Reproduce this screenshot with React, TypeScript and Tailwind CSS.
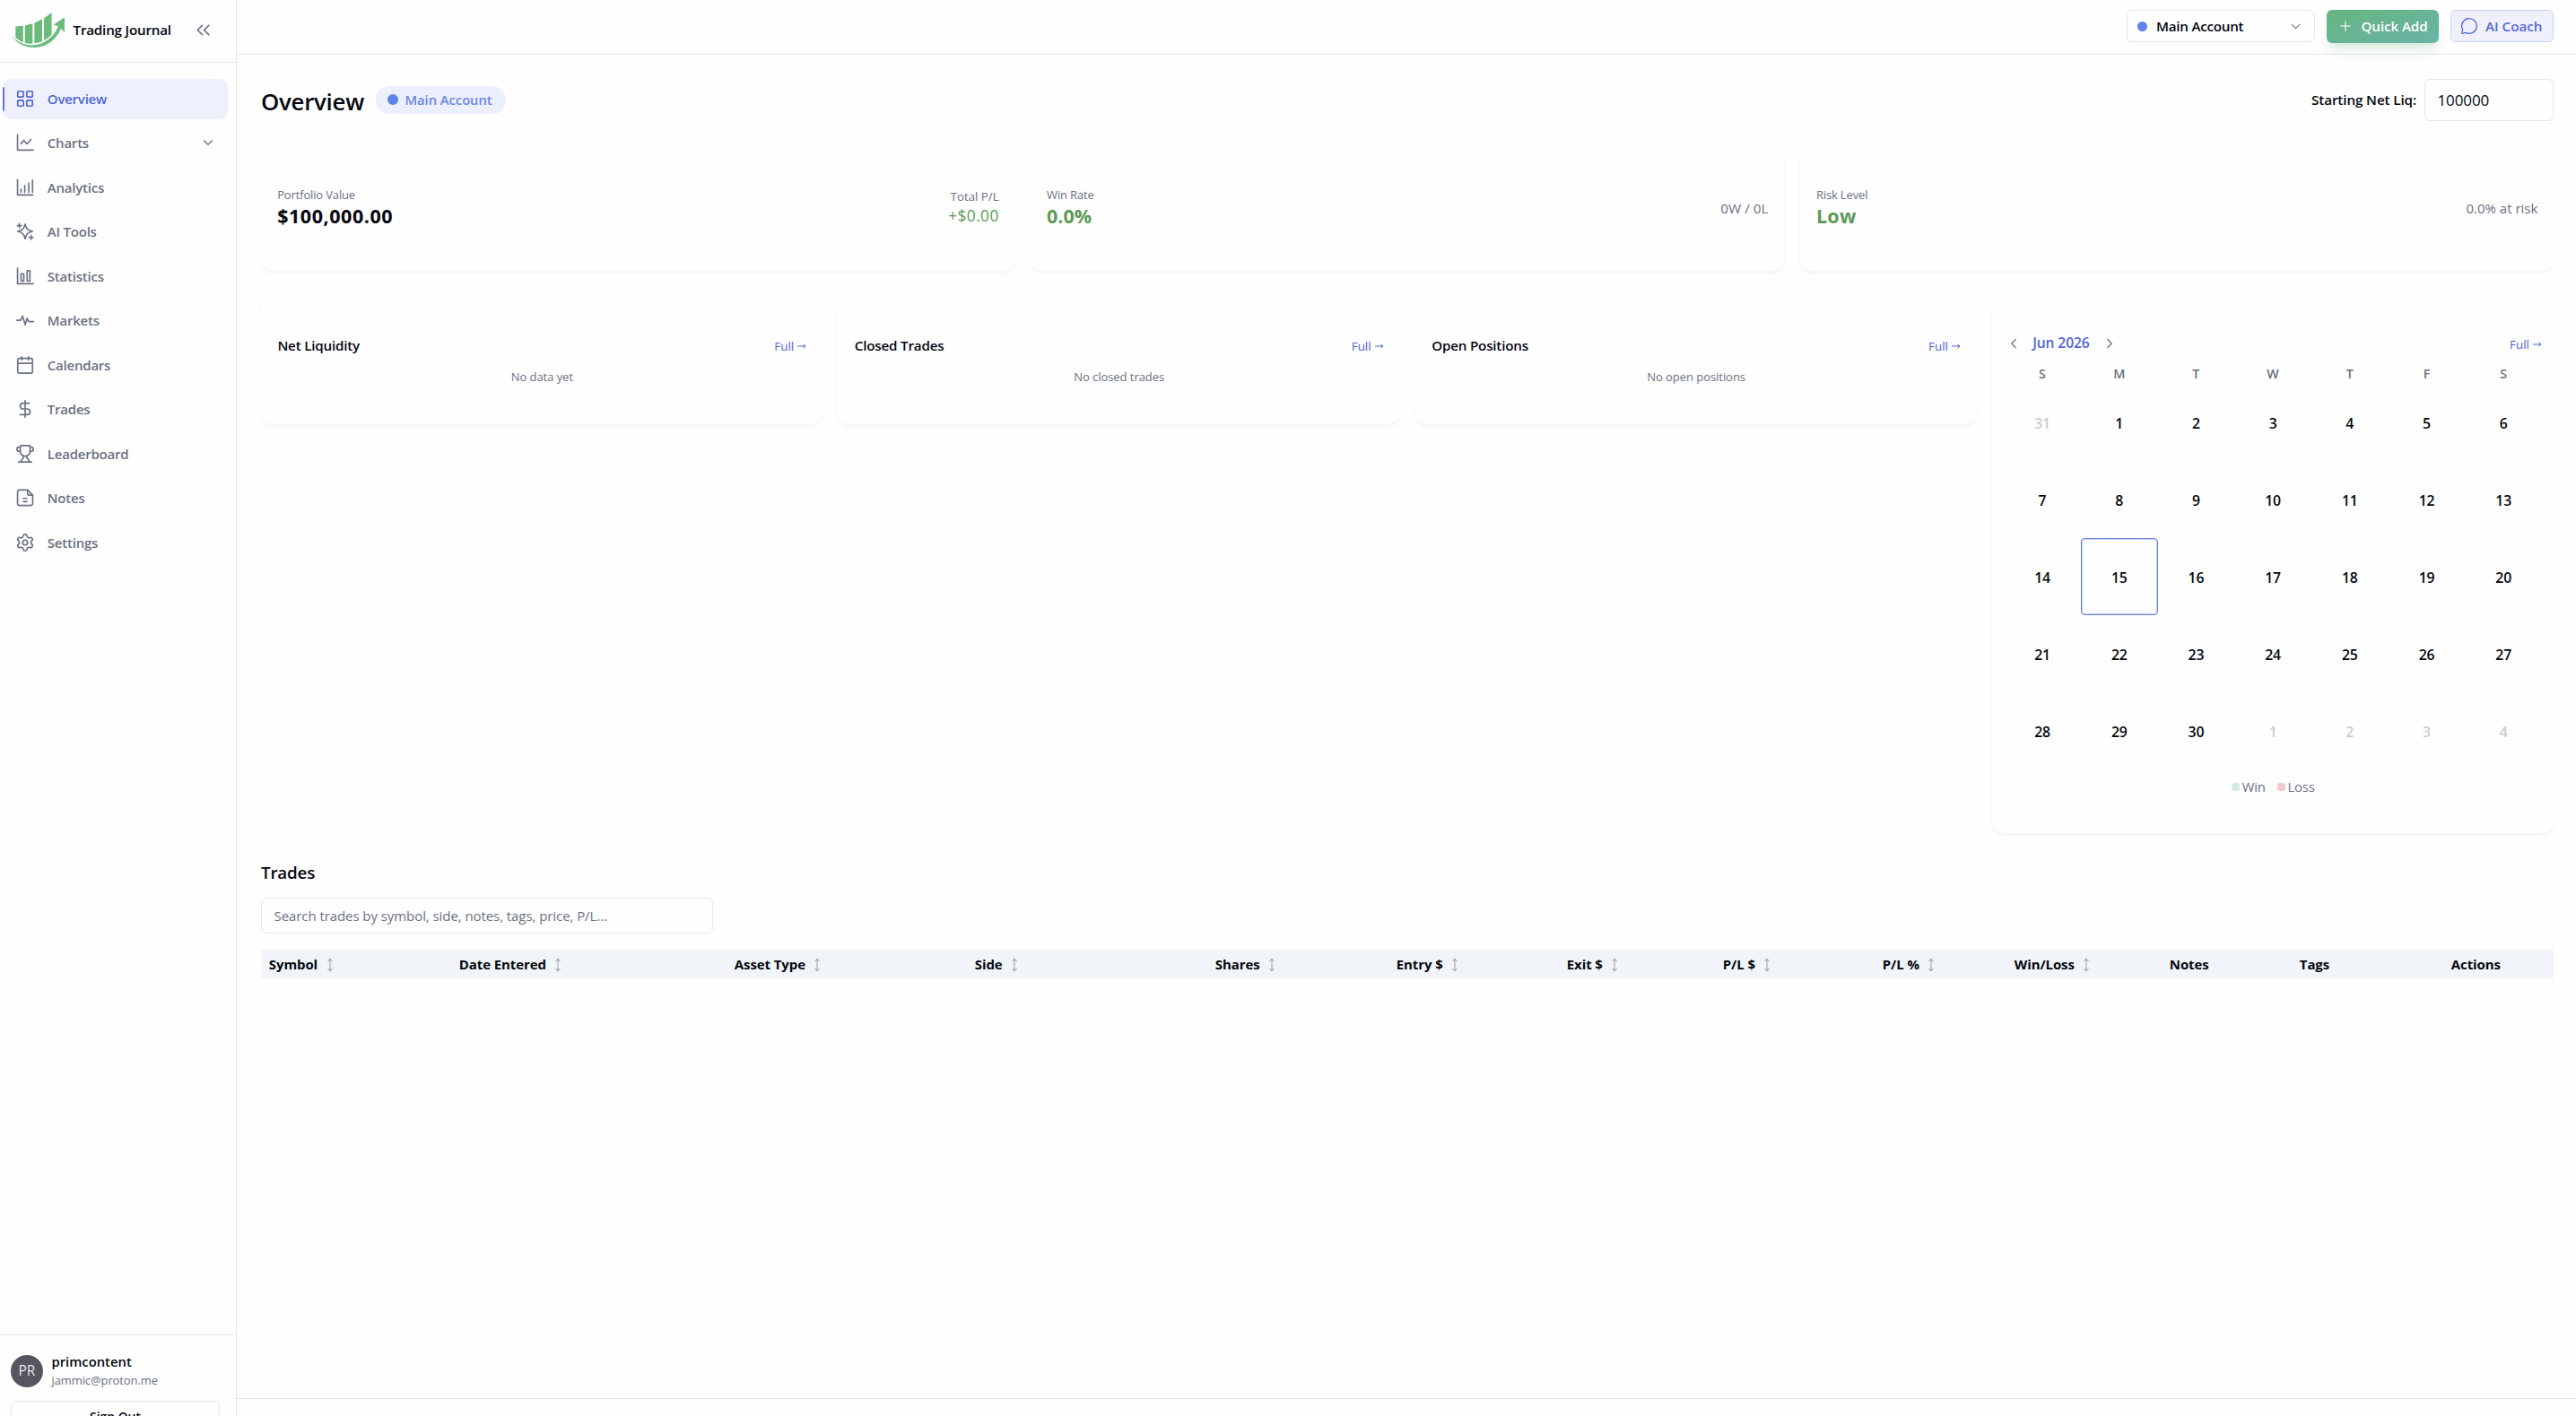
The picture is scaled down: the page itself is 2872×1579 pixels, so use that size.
import type { ReactNode } from "react";
import { Calendar, ChevronDown, ChevronLeft, ChevronRight, ChevronsLeft, DollarSign, LayoutGrid, MessageCircle, Plus, Settings, Trophy } from "lucide-react";

const iconProps = {
  width: 22,
  height: 22,
  viewBox: "0 0 24 24",
  fill: "none",
  stroke: "currentColor",
  strokeWidth: 1.8,
  strokeLinecap: "round" as const,
  strokeLinejoin: "round" as const,
};

const navItems: { label: string; icon: ReactNode }[] = [
  { label: "Overview", icon: <LayoutGrid size={22} strokeWidth={1.8} /> },
  {
    label: "Charts",
    icon: (
      <svg {...iconProps}>
        <path d="M2.8 2.5v18.7h19" />
        <path d="m6.8 13.2 3.6-4 3.8 4.4 5-5.4" />
      </svg>
    ),
  },
  {
    label: "Analytics",
    icon: (
      <svg {...iconProps}>
        <path d="M2.8 2.5v18.7h18.6" />
        <path d="M7 14v4M11.6 9.5V18M16.4 6.5V18M21 3v15" />
      </svg>
    ),
  },
  {
    label: "AI Tools",
    icon: (
      <svg {...iconProps}>
        <path d="M12 3.2c1.2 5.4 3 7.3 9 8.8-6 1.5-7.8 3.4-9 9-1.2-5.6-3-7.5-9-9 6-1.5 7.8-3.4 9-8.8Z" />
        <path d="M5 2.6v5M2.5 5.1h5M19.3 16.9v5M16.8 19.4h5" />
      </svg>
    ),
  },
  {
    label: "Statistics",
    icon: (
      <svg {...iconProps}>
        <path d="M2.8 2.2v19h19" />
        <rect x="7" y="9" width="3.4" height="8.8" rx=".5" />
        <rect x="14.4" y="5.3" width="3.4" height="12.5" rx=".5" />
      </svg>
    ),
  },
  {
    label: "Markets",
    icon: (
      <svg {...iconProps}>
        <path d="M2 12.2h4.6L9 7l3 10.6 2.3-7.8 2 4h5.9" />
      </svg>
    ),
  },
  { label: "Calendars", icon: <Calendar size={22} strokeWidth={1.8} /> },
  { label: "Trades", icon: <DollarSign size={22} strokeWidth={1.8} /> },
  { label: "Leaderboard", icon: <Trophy size={22} strokeWidth={1.8} /> },
  {
    label: "Notes",
    icon: (
      <svg {...iconProps}>
        <path d="M15 2.6H5a2.2 2.2 0 0 0-2.2 2.2v14.4A2.2 2.2 0 0 0 5 21.4h14a2.2 2.2 0 0 0 2.2-2.2V8.8Z" />
        <path d="M15 2.6v4.2a2 2 0 0 0 2 2h4.2M9.8 12.8h4.4M9.8 16.7h4.4" />
      </svg>
    ),
  },
  { label: "Settings", icon: <Settings size={22} strokeWidth={1.8} /> },
];

const days = [31, ...Array.from({ length: 30 }, (_, i) => i + 1), 1, 2, 3, 4];

const columns = [
  { label: "Symbol", width: "w-[212px]", sortable: true },
  { label: "Date Entered", width: "w-[307px]", sortable: true },
  { label: "Asset Type", width: "w-[268px]", sortable: true },
  { label: "Side", width: "w-[268px]", sortable: true },
  { label: "Shares", width: "w-[202px]", sortable: true },
  { label: "Entry $", width: "w-[190px]", sortable: true },
  { label: "Exit $", width: "w-[174px]", sortable: true },
  { label: "P/L $", width: "w-[178px]", sortable: true },
  { label: "P/L %", width: "w-[147px]", sortable: true },
  { label: "Win/Loss", width: "w-[173px]", sortable: true },
  { label: "Notes", width: "w-[145px]", sortable: false },
  { label: "Tags", width: "w-[169px]", sortable: false },
  { label: "Actions", width: "w-[123px]", sortable: false },
];

function Logo() {
  return (
    <svg width="60" height="40" viewBox="0 0 60 40" fill="#6dbb7b">
      <path d="M4.3 15.5 12.8 14.7V33.3C9.5 32 6.5 30 4.3 27.5ZM14.8 14.4 23.3 12.3V34.6C20.5 34.9 17.5 34.6 14.8 34ZM25.4 11.5 34 7.3V32C31.3 33.3 28.5 34.1 25.4 34.5ZM36 6.2 44.6 0V24.5C42 27.5 39.3 29.4 36 31.2Z" />
      <path d="M0 25.5C7 34 16 37 25 36.3 37 35.3 47 27 51.8 15.5L46.8 13.4 59 5.2V22L55 18C50 29.5 40 38 27 39 15.5 39.6 5 34.5 0 25.5Z" />
    </svg>
  );
}

function SortIcon() {
  return (
    <svg width="8" height="16" viewBox="0 0 8 16" fill="none" stroke="#a3a7ae" strokeWidth="1.1">
      <path d="M4 1.5v13M1.5 4 4 1.3 6.5 4M1.5 12 4 14.7 6.5 12" />
    </svg>
  );
}

function Card({ className = "", children }: { className?: string; children: ReactNode }) {
  return (
    <div className={`rounded-[13px] bg-[#fefefe] shadow-[0_3px_5px_-1px_rgba(0,0,0,0.05)] ${className}`}>
      {children}
    </div>
  );
}

function StatCard({ label, value, valueClass, children }: { label: string; value: string; valueClass: string; children: ReactNode }) {
  return (
    <Card className="flex h-[138.5px] items-center justify-between pr-[17.6px] pb-[2px] pl-[18.2px]">
      <div>
        <div className="text-[13px] leading-[18px] tracking-[-0.15px] text-[#6b7280]">{label}</div>
        <div className={`text-[21.5px] leading-[29px] font-bold ${valueClass}`}>{value}</div>
      </div>
      {children}
    </Card>
  );
}

function PanelCard({ title, empty }: { title: string; empty: string }) {
  return (
    <Card className="h-[144px] self-start pr-[17.6px] pl-[18.4px] pt-[46px]">
      <div className="flex h-[22px] items-center justify-between">
        <h3 className="text-[15.2px] font-semibold tracking-[-0.2px]">{title}</h3>
        <FullLink />
      </div>
      <p className="mt-[14.5px] text-center text-[13px] leading-[18px] tracking-[-0.05px] text-[#6b7280]">{empty}</p>
    </Card>
  );
}

function FullLink() {
  return (
    <a className="flex items-center gap-[4px] pt-px text-[13.4px] text-[#4f63d2]">
      Full
      <svg width="10" height="8" viewBox="0 0 10 8" fill="none" stroke="currentColor">
        <path d="M0 4h9M6.5 1.8 9 4 6.5 6.2" />
      </svg>
    </a>
  );
}

function Sidebar() {
  return (
    <aside className="flex w-[264px] shrink-0 flex-col border-r border-[#e5e7eb]">
      <div className="flex h-[70px] shrink-0 items-center border-b border-[#e5e7eb] pr-[24px] pb-[2px] pl-[13px]">
        <Logo />
        <span className="ml-[8.5px] text-[15.2px] font-semibold tracking-[-0.2px]">Trading Journal</span>
        <ChevronsLeft size={25} strokeWidth={1.6} className="ml-auto text-[#6b7280]" />
      </div>
      <nav className="flex flex-1 flex-col gap-1 pt-[17.5px] pr-[9px] pl-[3px]">
        {navItems.map(({ label, icon }, i) => (
          <a
            key={label}
            className={`relative flex h-[45.5px] items-center rounded-[9px] pr-[13px] pb-px pl-[14.3px] text-[15px] font-semibold tracking-[-0.22px] ${
              i === 0 ? "bg-[#eef1fd] text-[#5065d6]" : "text-[#6b7280]"
            }`}
          >
            {i === 0 && <span className="absolute top-[9px] left-0 h-[27px] w-[2px] rounded-r bg-[#5b74d8]" />}
            {icon}
            <span className="ml-[13.5px]">{label}</span>
            {label === "Charts" && <ChevronDown size={18} strokeWidth={1.7} className="ml-auto" />}
          </a>
        ))}
      </nav>
      <div className="h-[91px] shrink-0 overflow-hidden border-t border-[#e5e7eb] px-3 pt-[18px]">
        <div className="flex items-center gap-[9.5px]">
          <div className="flex size-9 items-center justify-center rounded-full bg-[#55565e] text-[15.5px] text-gray-200">PR</div>
          <div className="pt-px">
            <div className="text-[14.8px] leading-[21px] font-semibold">primcontent</div>
            <div className="text-[13px] leading-[21px] tracking-[-0.1px] text-[#6b7280]">jammic@proton.me</div>
          </div>
        </div>
        <button className="mt-[11.5px] block h-9 w-[233px] rounded-[6px] border border-[#e5e7eb] pt-[2px] text-[13.9px] font-semibold">Sign Out</button>
      </div>
    </aside>
  );
}

function CalendarCard() {
  return (
    <Card className="h-[600.5px] px-[13px] pt-[43px]">
      <div className="flex h-[24px] items-center justify-between">
        <div className="flex items-center pb-px text-[#6b7280]">
          <ChevronLeft size={18} strokeWidth={1.7} className="ml-[1.5px]" />
          <span className="mx-[12.5px] w-[64px] text-[15.6px] font-semibold tracking-[-0.1px] whitespace-nowrap text-[#5065d6]">Jun 2026</span>
          <ChevronRight size={18} strokeWidth={1.7} />
        </div>
        <FullLink />
      </div>
      <div className="mt-[10px] grid h-[22.5px] grid-cols-7 text-center text-[14.3px] leading-[21px] font-semibold text-[#6b7280]">
        {["S", "M", "T", "W", "T", "F", "S"].map((d, i) => (
          <span key={i}>{d}</span>
        ))}
      </div>
      <div className="grid grid-cols-7 text-[15.8px] font-semibold tracking-[-0.2px]">
        {days.map((day, i) => (
          <div
            key={i}
            className={`flex h-[86px] items-center justify-center rounded-[4px] pt-[3px] ${i === 0 || i > 30 ? "text-[#c9cbd0]" : ""} ${
              i === 15 ? "border-[1.5px] border-[#6b86dc] ring-1 ring-[#6b86dc]/40 ring-inset" : ""
            }`}
          >
            {day}
          </div>
        ))}
      </div>
      <div className="mt-[8px] flex justify-center gap-[13px] text-[14.8px] leading-[22px] tracking-[-0.2px] text-[#6b7280]">
        <span className="flex items-center gap-[3px]">
          <i className="size-[9px] rounded-[3px] bg-[#d3eae0]" />
          Win
        </span>
        <span className="flex items-center gap-[3px]">
          <i className="size-[9px] rounded-[3px] bg-[#f3c9cd]" />
          Loss
        </span>
      </div>
    </Card>
  );
}

export default function App() {
  return (
    <div className="flex h-[1579px] w-[2872px] overflow-hidden bg-[#fefefe] font-['Open_Sans','Noto_Sans',sans-serif] text-[#05070f]">
      <Sidebar />
      <div className="flex min-w-0 flex-1 flex-col">
        <header className="flex h-[61px] shrink-0 items-center justify-end gap-[13px] border-b border-[#e5e7eb] pr-[25px] pb-[2px] text-[15.2px] font-semibold">
          <div className="flex h-[36.5px] w-[210px] items-center rounded-[6px] border border-[#e5e7eb] pr-[12px] pl-[11px]">
            <i className="size-[11px] rounded-full bg-[#5f82ea]" />
            <span className="ml-[10px] tracking-[-0.25px]">Main Account</span>
            <ChevronDown size={17} strokeWidth={1.5} className="ml-auto text-[#6b7280]" />
          </div>
          <button className="flex h-[37px] w-[125px] items-center rounded-[6px] bg-gradient-to-br from-[#66b57f] to-[#6ab3a8] pl-[12px] text-white shadow-[0_10px_16px_-3px_rgba(102,187,125,0.22),0_4px_6px_-4px_rgba(102,187,125,0.2)]">
            <Plus size={18} strokeWidth={1.5} />
            <span className="ml-[8.5px] tracking-[-0.1px] whitespace-nowrap">Quick Add</span>
          </button>
          <button className="flex h-[36.5px] w-[115px] items-center rounded-[6px] border border-[#c9d0f4] bg-[#eff0fc] pl-[10px] text-[#5468d8]">
            <MessageCircle size={20} strokeWidth={1.6} />
            <span className="ml-[8px] whitespace-nowrap">AI Coach</span>
          </button>
        </header>
        <main className="flex flex-1 flex-col pt-[27px] pr-[25px] pl-[27px]">
          <div className="flex h-[47px] items-center">
            <h1 className="pt-[2px] text-[25.8px] leading-[30px] font-semibold tracking-[-0.25px]">Overview</h1>
            <span className="ml-[13.5px] flex h-[31px] w-[145px] items-center rounded-full bg-[#ebeffe] pb-px pl-[13px] text-[14.8px] font-semibold text-[#6c87e6]">
              <i className="size-[12px] rounded-full bg-[#5f82ea]" />
              <span className="ml-[7px] tracking-[-0.05px] whitespace-nowrap">Main Account</span>
            </span>
            <span className="ml-auto text-[15.2px] font-semibold tracking-[-0.1px]">Starting Net Liq:</span>
            <div className="ml-[9px] flex h-[47px] w-[144px] items-center rounded-[6px] border border-[#e5e7eb] pl-[13.5px] text-[17px] tracking-[-0.1px]">100000</div>
          </div>
          <div className="mt-[28.5px] grid grid-cols-3 gap-[17.6px]">
            <StatCard label="Portfolio Value" value="$100,000.00" valueClass="tracking-[0.55px]">
              <div className="-mt-px text-right">
                <div className="text-[13.3px] leading-[20px] text-[#6b7280]">Total P/L</div>
                <div className="text-[17.3px] leading-[24px] font-medium tracking-[0.4px] text-[#5b9a58]">+$0.00</div>
              </div>
            </StatCard>
            <StatCard label="Win Rate" value="0.0%" valueClass="text-[#5b9a58]">
              <span className="pt-[2px] text-[15.3px] text-[#6b7280]">0W / 0L</span>
            </StatCard>
            <StatCard label="Risk Level" value="Low" valueClass="tracking-[0.3px] text-[#5b9a58]">
              <span className="pt-px text-[15px] text-[#6b7280]">0.0% at risk</span>
            </StatCard>
          </div>
          <div className="mt-[26.5px] grid grid-cols-4 gap-[17.6px]">
            <PanelCard title="Net Liquidity" empty="No data yet" />
            <PanelCard title="Closed Trades" empty="No closed trades" />
            <PanelCard title="Open Positions" empty="No open positions" />
            <CalendarCard />
          </div>
          <h2 className="mt-[30px] text-[18.8px] leading-[28px] font-semibold tracking-[-0.2px]">Trades</h2>
          <div className="mt-[14px] flex h-[40px] w-[504px] shrink-0 items-center rounded-[6px] border border-[#e5e7eb] pt-px pl-[13.5px] text-[15px] tracking-[-0.07px] text-[#6b7280]">
            Search trades by symbol, side, notes, tags, price, P/L...
          </div>
          <div className="mt-[18px] flex h-[32px] shrink-0 items-center overflow-hidden bg-[#f1f5f9] pt-px pl-[8.8px] text-[15px] font-bold tracking-[-0.1px] whitespace-nowrap">
            {columns.map(({ label, width, sortable }) => (
              <div key={label} className={`flex shrink-0 items-center gap-[9.5px] ${width}`}>
                {label}
                {sortable && <SortIcon />}
              </div>
            ))}
          </div>
        </main>
        <footer className="h-[20px] shrink-0 border-t border-[#e5e7eb]" />
      </div>
    </div>
  );
}
